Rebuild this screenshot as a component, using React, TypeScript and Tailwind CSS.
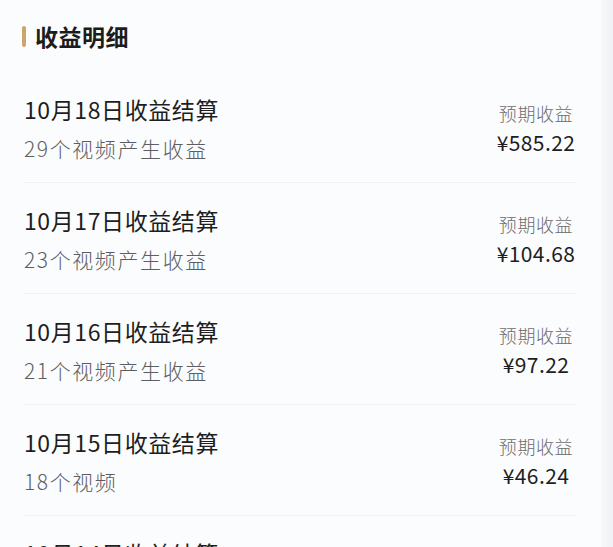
import React from "react";

const rows = [
  { date: "10月18日收益结算", sub: "29个视频产生收益", amount: "¥585.22" },
  { date: "10月17日收益结算", sub: "23个视频产生收益", amount: "¥104.68" },
  { date: "10月16日收益结算", sub: "21个视频产生收益", amount: "¥97.22" },
  { date: "10月15日收益结算", sub: "18个视频", amount: "¥46.24" },
  { date: "10月14日收益结算", sub: "20个视频产生收益", amount: "¥60.10" },
];

export default function App() {
  return (
    <div
      className="w-[613px] h-[547px] overflow-hidden flex bg-[#fbfcfd]"
      style={{ fontFamily: '"Noto Sans CJK SC", "Noto Sans", sans-serif' }}
    >
      <div className="flex-1 flex flex-col">
        <div className="h-[72px] shrink-0 flex items-center pl-[22px]">
          <div className="w-[4px] h-[21px] rounded-full bg-[#caa56c]" />
          <div className="ml-[9px] text-[23px] leading-[30px] font-bold text-[#1c1c1c] tracking-[0.5px]">
            收益明细
          </div>
        </div>
        {rows.map((r, i) => (
          <div
            key={i}
            className="h-[111px] shrink-0 ml-[24px] mr-[24px] flex justify-between border-b border-[#eef0f2]"
          >
            <div className="flex flex-col pt-[21px]">
              <div className="text-[23px] leading-[32px] text-[#1e1e1e] tracking-[0.6px]">
                {r.date}
              </div>
              <div className="mt-[8px] text-[21px] leading-[30px] font-light text-[#5e5e62] tracking-[1.6px]">
                {r.sub}
              </div>
            </div>
            <div className="w-[82px] flex flex-col items-center pt-[28px]">
              <div className="text-[18px] leading-[26px] font-light text-[#6c6c70] tracking-[0.6px] whitespace-nowrap">
                预期收益
              </div>
              <div className="mt-[1px] text-[21px] leading-[30px] text-[#1e1e1e] tracking-[0.4px] whitespace-nowrap">
                {r.amount}
              </div>
            </div>
          </div>
        ))}
      </div>
      <div className="w-[12px] shrink-0 bg-gradient-to-r from-[#f7f8fa] to-[#eff1f5]" />
    </div>
  );
}
